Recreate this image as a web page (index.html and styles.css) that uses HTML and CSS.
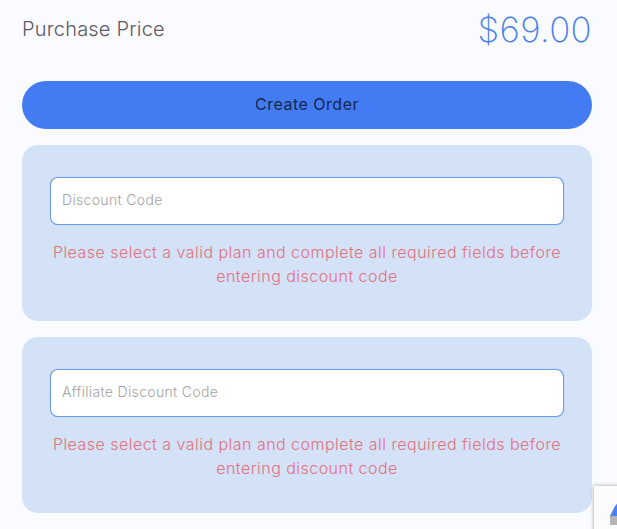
FILE: index.html
```html
<!DOCTYPE html>
<html>
    <head>
        <meta name="viewport" content="width=device-width, initial-scale=1" />
        <meta http-equiv="content-type" content="text/html; charset=utf-8" />
        <title>Purchase</title>
        <link rel="stylesheet" href="styles.css">
    </head>
    <body>
        <div class="summary">
            <span class="label">Purchase Price</span>
            <span class="price">$69.00</span>
        </div>
        <button class="btn" type="button">Create Order</button>
        <div class="card">
            <input class="f-control" type="text" placeholder="Discount Code">
            <p class="error">Please select a valid plan and complete all required fields before entering discount code</p>
        </div>
        <div class="card">
            <input class="f-control" type="text" placeholder="Affiliate Discount Code">
            <p class="error">Please select a valid plan and complete all required fields before entering discount code</p>
        </div>
        <div class="recaptcha">
            <svg width="24" height="33" viewBox="0 0 24 33">
                <path d="M16 2 L5 14 L0 24 L24 24 L24 12 Z" fill="#4a83ee"/>
                <rect x="0" y="24" width="24" height="9" fill="#b5b5b5"/>
            </svg>
        </div>
    </body>
</html>
```

FILE: styles.css
```css
*{
    box-sizing: border-box;
    padding: 0;
    margin: 0;
}
html, body{
    height: 529px;
    overflow: hidden;
}
body{
    position: relative;
    padding: 0 25px 0 22px;
    background: #fafbff;
    color: #5c5966;
    font-family: "Inter", "Open Sans", sans-serif;
    font-weight: 300;
}
.summary{
    height: 57px;
    display: flex;
    justify-content: space-between;
    align-items: center;
}
.label{
    font-size: 20px;
    letter-spacing: 0.2px;
}
.price{
    font-size: 34.8px;
    font-weight: 200;
    color: #4a7fe8;
    letter-spacing: 0.4px;
}
.btn{
    display: block;
    width: 100%;
    height: 48px;
    margin-top: 24px;
    padding-bottom: 2px;
    border: none;
    border-radius: 24px;
    background: #437cf2;
    color: #16274f;
    font-family: inherit;
    font-size: 16px;
    font-weight: 400;
    letter-spacing: 0.5px;
}
.card{
    height: 176px;
    margin-top: 16px;
    padding: 32px 28px 0;
    background: #d3e2f6;
    border-radius: 16px;
}
.f-control{
    display: block;
    width: 100%;
    height: 48px;
    padding: 0 11px 4px;
    background: #fff;
    border: 1px solid #6d9cee;
    border-radius: 8px;
    box-shadow: 0 0 1px #6d9cee;
    outline: 0;
    font-family: inherit;
    font-size: 14px;
    font-weight: 300;
    letter-spacing: 0.33px;
}
.f-control::placeholder{
    color: #a3a3a3;
}
.error{
    margin-top: 15px;
    font-size: 16px;
    line-height: 24px;
    letter-spacing: 0.47px;
    text-align: center;
    color: #e5707f;
}
.recaptcha{
    position: absolute;
    left: 594px;
    top: 486px;
    width: 30px;
    height: 60px;
    padding: 6px 0 0 16px;
    background: #fbfbfb;
    box-shadow: 0 0 4px #9a9a9a;
}
.recaptcha svg{
    display: block;
}
```
